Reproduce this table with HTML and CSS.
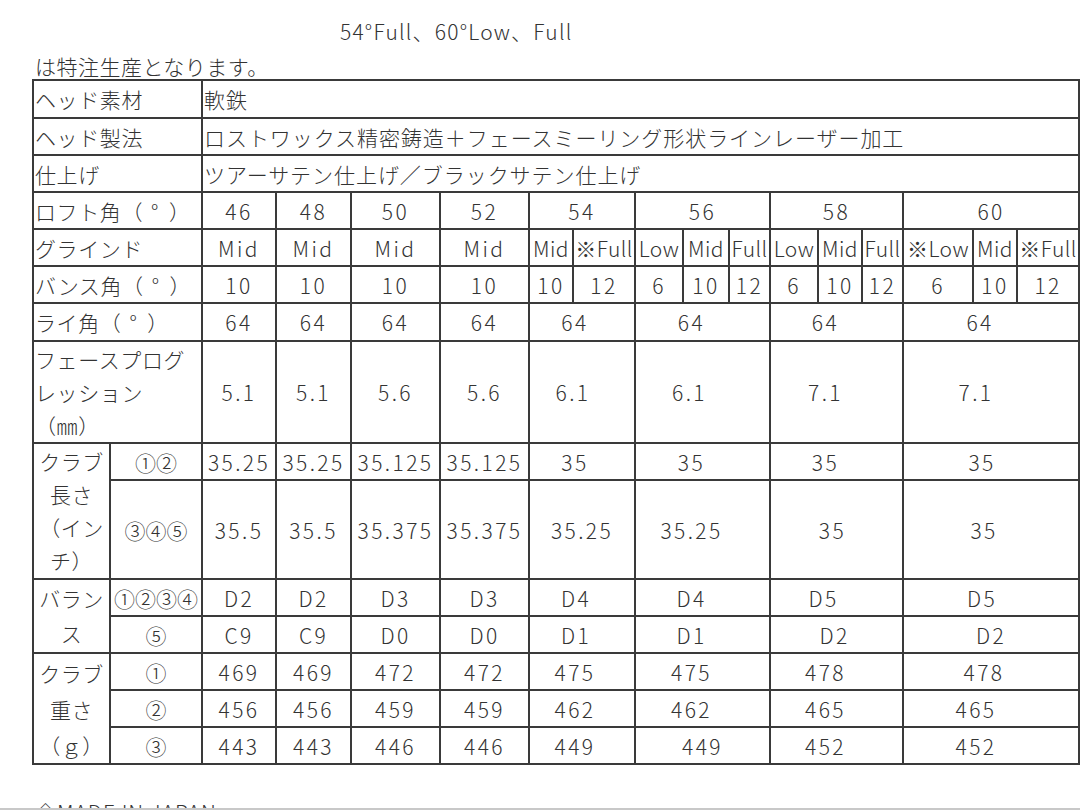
FILE: index.html
```html
<!DOCTYPE html>
<html lang="ja">
<head>
<meta charset="utf-8">
<title>スペック</title>
<link rel="stylesheet" href="styles.css">
</head>
<body>
<div class="page">
  <p class="title">54°Full、60°Low、Full</p>
  <p class="note">は特注生産となります。</p>
  <table class="spec">
    <colgroup>
      <col class="c77"><col class="c92">
      <col class="c74"><col class="c75"><col class="c89"><col class="c89">
      <col class="c44"><col class="c62">
      <col class="c48"><col class="c46"><col class="c41">
      <col class="c48"><col class="c44"><col class="c41">
      <col class="c70"><col class="c44"><col class="c62">
    </colgroup>
    <tr class="r38">
      <td class="lab" colspan="2">ヘッド素材</td>
      <td class="txt" colspan="15">軟鉄</td>
    </tr>
    <tr>
      <td class="lab" colspan="2">ヘッド製法</td>
      <td class="txt" colspan="15">ロストワックス精密鋳造＋フェースミーリング形状ラインレーザー加工</td>
    </tr>
    <tr>
      <td class="lab" colspan="2">仕上げ</td>
      <td class="txt" colspan="15">ツアーサテン仕上げ／ブラックサテン仕上げ</td>
    </tr>
    <tr>
      <td class="lab" colspan="2">ロフト角（<span class="deg">°</span>）</td>
      <td>46</td><td>48</td><td>50</td><td>52</td>
      <td colspan="2">54</td><td colspan="3">56</td><td colspan="3">58</td><td colspan="3">60</td>
    </tr>
    <tr>
      <td class="lab" colspan="2">グラインド</td>
      <td>Mid</td><td>Mid</td><td>Mid</td><td>Mid</td>
      <td class="tight">Mid</td><td class="tight">※Full</td>
      <td class="tight">Low</td><td class="tight">Mid</td><td class="tight">Full</td>
      <td class="tight">Low</td><td class="tight">Mid</td><td class="tight">Full</td>
      <td class="tight">※Low</td><td class="tight">Mid</td><td class="tight">※Full</td>
    </tr>
    <tr>
      <td class="lab" colspan="2">バンス角（<span class="deg">°</span>）</td>
      <td>10</td><td>10</td><td>10</td><td>10</td>
      <td>10</td><td>12</td>
      <td>6</td><td>10</td><td>12</td>
      <td>6</td><td>10</td><td>12</td>
      <td>6</td><td>10</td><td>12</td>
    </tr>
    <tr class="r38">
      <td class="lab" colspan="2">ライ角（<span class="deg">°</span>）</td>
      <td>64</td><td>64</td><td>64</td><td>64</td>
      <td colspan="2" class="s7">64</td><td colspan="3" class="s11">64</td><td colspan="3" class="s11">64</td><td colspan="3" class="s11">64</td>
    </tr>
    <tr class="r102">
      <td class="lab multi33" colspan="2">フェースプログ<br>レッション<br>（㎜）</td>
      <td>5.1</td><td>5.1</td><td>5.6</td><td>5.6</td>
      <td colspan="2" class="s9">6.1</td><td colspan="3" class="s13">6.1</td><td colspan="3" class="s11">7.1</td><td colspan="3" class="s15">7.1</td>
    </tr>
    <tr>
      <td class="grp multi33" rowspan="2">クラブ<br>長さ<br>（イン<br>チ）</td>
      <td class="sub">①②</td>
      <td>35.25</td><td>35.25</td><td>35.125</td><td>35.125</td>
      <td colspan="2" class="s7">35</td><td colspan="3" class="s11">35</td><td colspan="3" class="s11">35</td><td colspan="3" class="s9">35</td>
    </tr>
    <tr class="r99">
      <td class="sub">③④⑤</td>
      <td>35.5</td><td>35.5</td><td>35.375</td><td>35.375</td>
      <td colspan="2">35.25</td><td colspan="3" class="s11">35.25</td><td colspan="3" class="s4">35</td><td colspan="3" class="s7">35</td>
    </tr>
    <tr>
      <td class="grp multi35" rowspan="2">バラン<br>ス</td>
      <td class="sub">①②③④</td>
      <td>D2</td><td>D2</td><td>D3</td><td>D3</td>
      <td colspan="2" class="s6">D4</td><td colspan="3" class="s11">D4</td><td colspan="3" class="s13">D5</td><td colspan="3" class="s9">D5</td>
    </tr>
    <tr>
      <td class="sub">⑤</td>
      <td>C9</td><td>C9</td><td>D0</td><td>D0</td>
      <td colspan="2" class="s6">D1</td><td colspan="3" class="s11">D1</td><td colspan="3" class="s2">D2</td><td colspan="3">D2</td>
    </tr>
    <tr>
      <td class="grp multi36" rowspan="3">クラブ<br>重さ<br>（ｇ）</td>
      <td class="sub">①</td>
      <td>469</td><td>469</td><td>472</td><td>472</td>
      <td colspan="2" class="s7">475</td><td colspan="3" class="s11">475</td><td colspan="3" class="s11">478</td><td colspan="3" class="s7">478</td>
    </tr>
    <tr>
      <td class="sub">②</td>
      <td>456</td><td>456</td><td>459</td><td>459</td>
      <td colspan="2" class="s7">462</td><td colspan="3" class="s11">462</td><td colspan="3" class="s11">465</td><td colspan="3" class="s15">465</td>
    </tr>
    <tr>
      <td class="sub">③</td>
      <td>443</td><td>443</td><td>446</td><td>446</td>
      <td colspan="2" class="s7">449</td><td colspan="3">449</td><td colspan="3" class="s11">452</td><td colspan="3" class="s15">452</td>
    </tr>
  </table>
  <p class="made">◇MADE IN JAPAN</p>
</div>
<div class="rule"></div>
</body>
</html>
```

FILE: styles.css
```css
html, body {
  margin: 0;
  padding: 0;
  background: #ffffff;
}
body {
  width: 1080px;
  height: 810px;
  overflow: hidden;
  font-family: "Noto Sans CJK JP", "Noto Sans", sans-serif;
  font-size: 21px;
  font-weight: 300;
  color: #333333;
}
.page {
  height: 808px;
  overflow: hidden;
}
.title {
  margin: 0 0 0 340px;
  padding-top: 19px;
  line-height: 24px;
  letter-spacing: 1.2px;
}
.note {
  margin: 11px 0 0 35px;
  line-height: 24px;
  letter-spacing: 0.5px;
}
.spec {
  margin: 1px 0 0 32px;
  border-collapse: collapse;
  table-layout: fixed;
  width: 1046px;
}
.c77 { width: 77px; }
.c92 { width: 92px; }
.c74 { width: 74px; }
.c75 { width: 75px; }
.c89 { width: 89px; }
.c44 { width: 44px; }
.c62 { width: 62px; }
.c48 { width: 48px; }
.c46 { width: 46px; }
.c41 { width: 41px; }
.c70 { width: 70px; }
.spec tr { height: 37px; }
.spec tr.r38 { height: 38px; }
.spec tr.r102 { height: 102px; }
.spec tr.r99 { height: 99px; }
.spec td {
  border: 2px solid #3a3a3a;
  padding: 0;
  text-align: center;
  vertical-align: middle;
  line-height: 24px;
  letter-spacing: 2.4px;
  white-space: nowrap;
  overflow: hidden;
}
.spec td.tight { letter-spacing: 0.4px; }
.spec td.lab {
  text-align: left;
  padding-left: 1px;
  letter-spacing: 0.6px;
}
.spec td.txt {
  text-align: left;
  padding-left: 1px;
  letter-spacing: 0.95px;
}
.spec td.grp {
  letter-spacing: 0.5px;
  padding: 0 1px;
}
.spec td.sub { letter-spacing: 0; }
.spec td.multi33 { line-height: 33px; }
.spec td.multi35 { line-height: 35px; }
.spec td.multi36 { line-height: 36px; }
.deg {
  padding: 0 10px 0 8px;
}
.spec td.s2 { padding-right: 4px; }
.spec td.s4 { padding-right: 8px; }
.spec td.s6 { padding-right: 12px; }
.spec td.s7 { padding-right: 14px; }
.spec td.s9 { padding-right: 18px; }
.spec td.s11 { padding-right: 22px; }
.spec td.s13 { padding-right: 26px; }
.spec td.s15 { padding-right: 30px; }
.made {
  margin: 35px 0 0 35px;
  line-height: 24px;
  letter-spacing: 1px;
}
.rule {
  height: 2px;
  background: #c8c8c8;
}
```
